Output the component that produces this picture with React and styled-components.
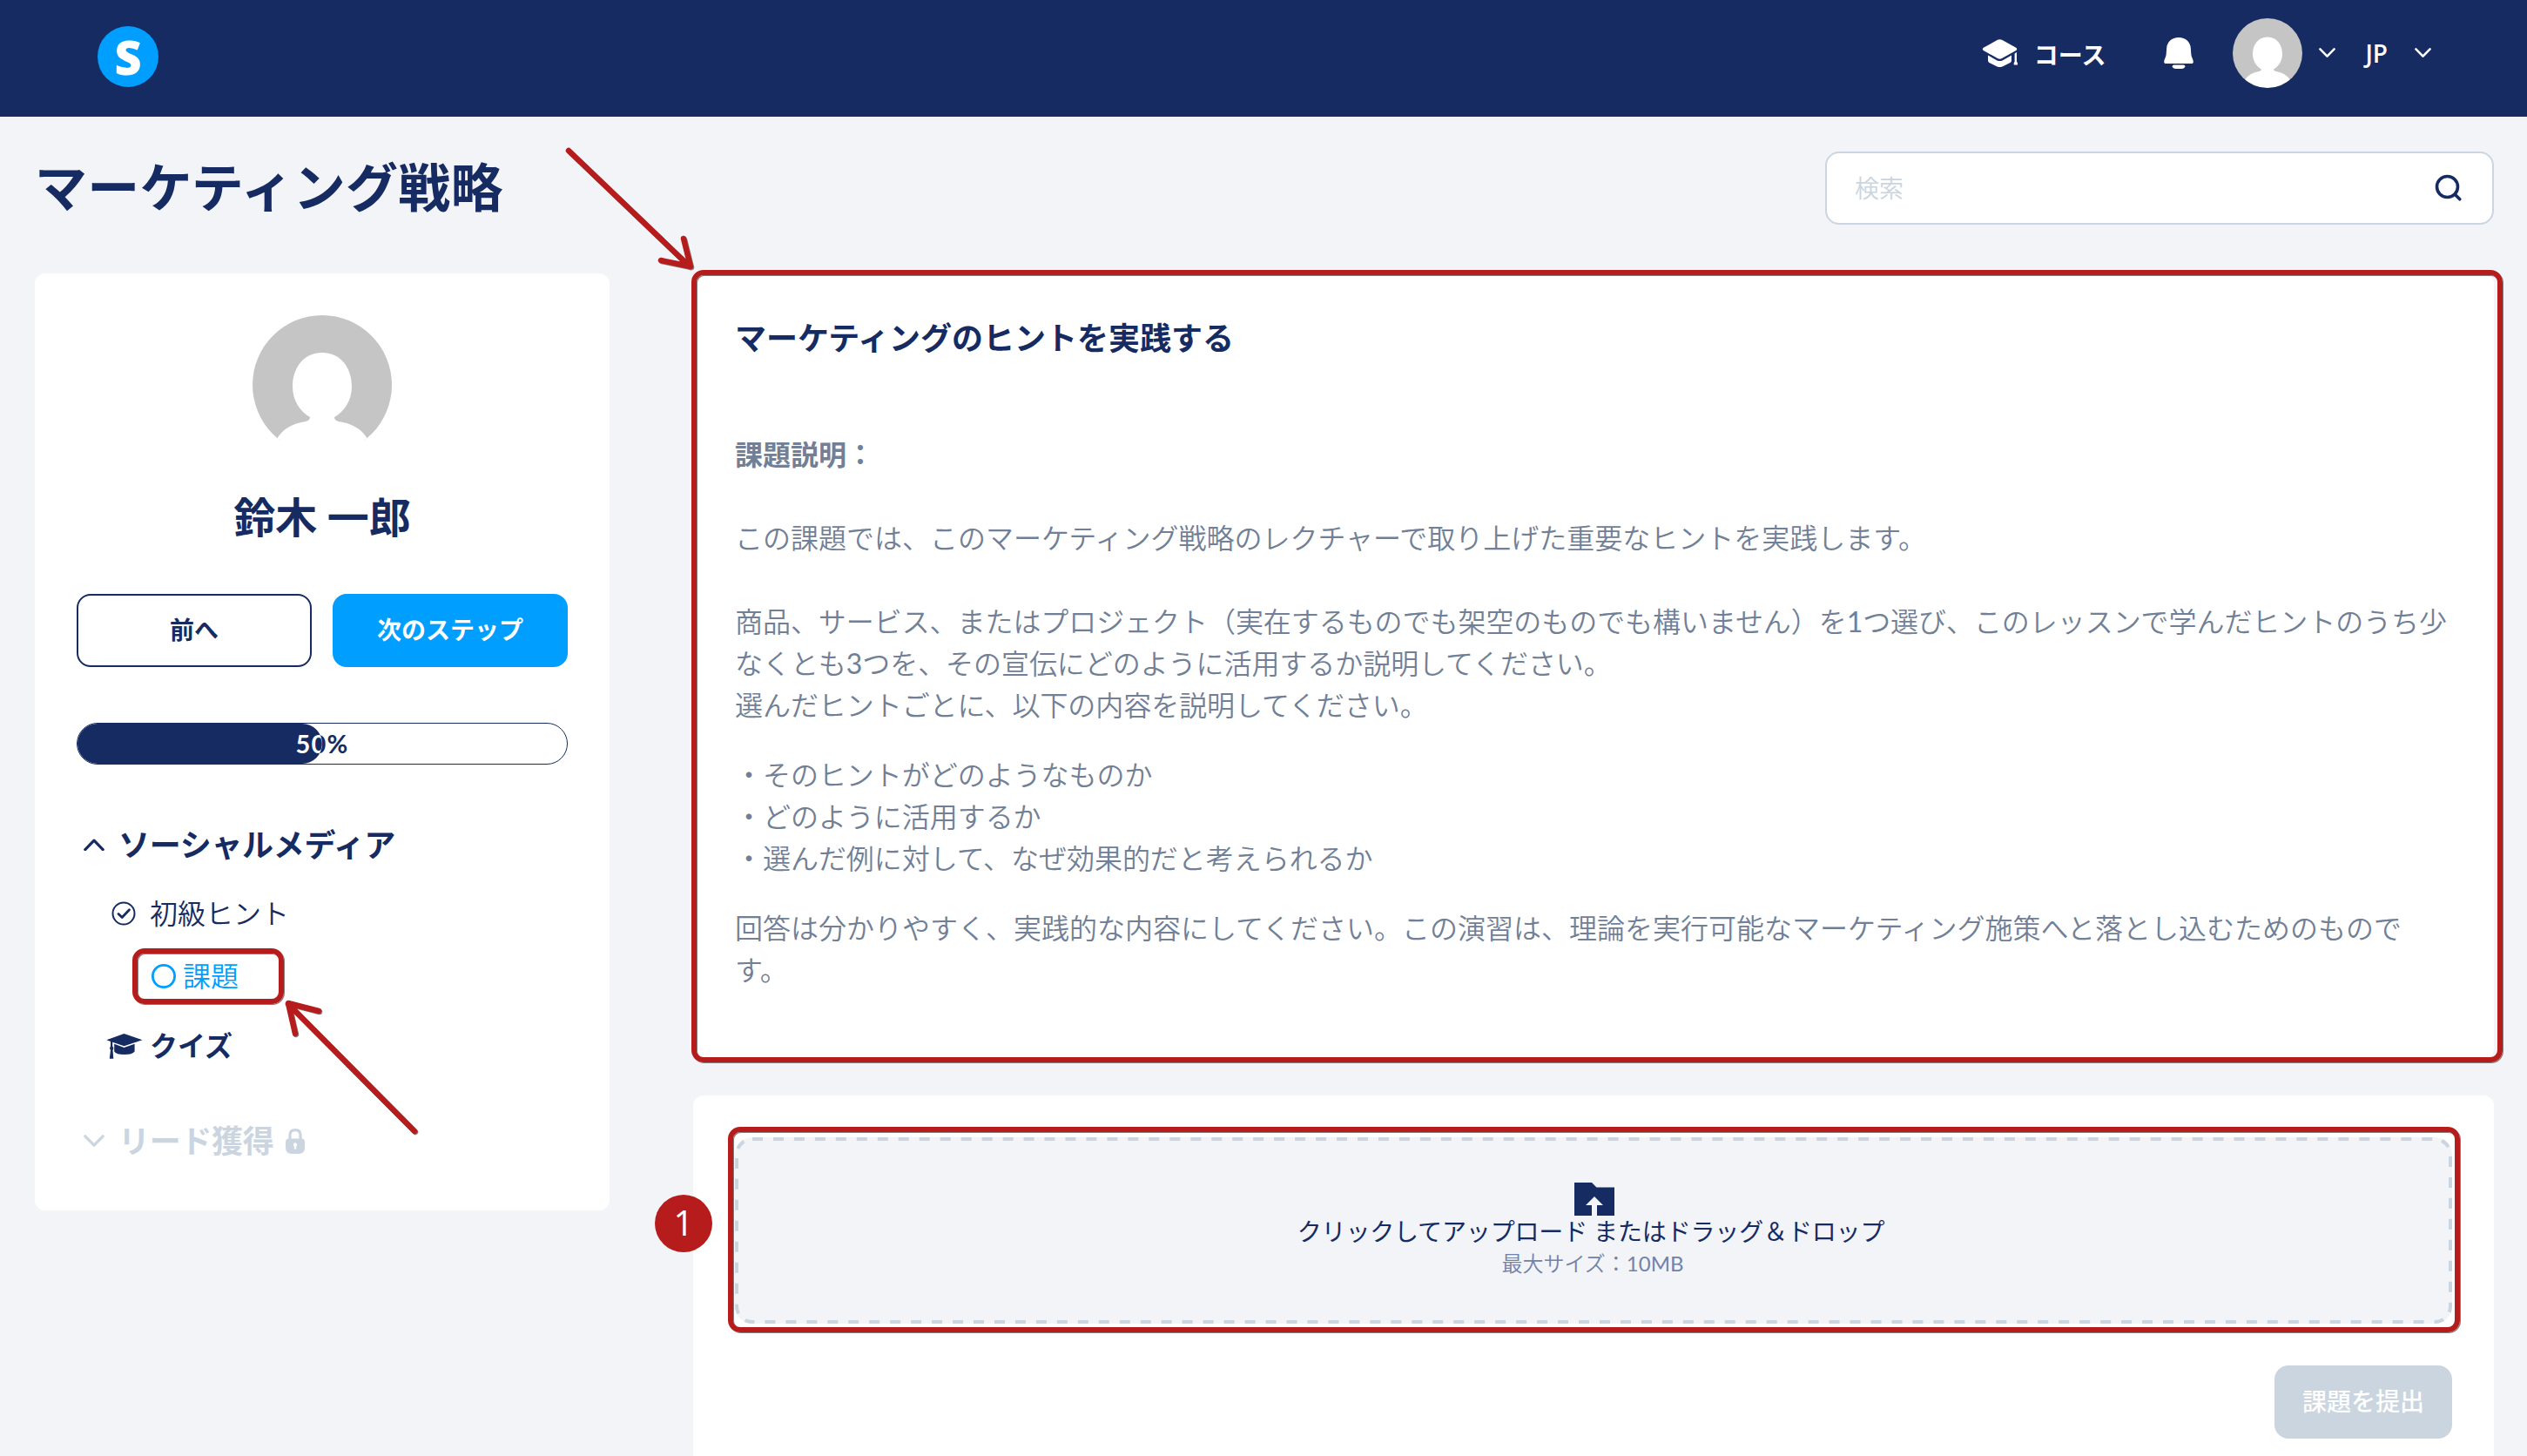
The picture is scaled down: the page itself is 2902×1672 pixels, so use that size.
import React from "react";
import styled, { createGlobalStyle } from "styled-components";

const navy = "#152b62";
const blue = "#009fff";
const red = "#b71c1c";
const slate = "#718096";
const mist = "#cbd5e0";
const canvas = "#f2f4f8";

const GlobalStyle = createGlobalStyle`
  *, *::before, *::after { box-sizing: border-box; }
  body {
    margin: 0;
    background: ${canvas};
    color: ${navy};
    font-family: Lato, "Noto Sans CJK JP", sans-serif;
    overflow: hidden;
  }
  h1, h2, h3, p { margin: 0; }
  button, input { font: inherit; }
`;

const Page = styled.div`
  position: relative;
  display: flex;
  flex-direction: column;
  height: 1672px;
  overflow: hidden;
`;

const Header = styled.header`
  display: flex;
  flex-shrink: 0;
  justify-content: space-between;
  align-items: flex-start;
  height: 134px;
  padding: 0 110px 0 112px;
  background: ${navy};
  color: #fff;
`;

const Logo = styled.div`
  display: flex;
  align-items: center;
  justify-content: center;
  width: 70px;
  height: 70px;
  margin-top: 30px;
  border-radius: 50%;
  background: ${blue};
  font-family: "Open Sans", sans-serif;
  font-weight: 800;
  font-size: 54px;
  line-height: 70px;
`;

const Nav = styled.nav`
  display: flex;
  align-items: center;
  height: 80px;
  margin-top: 21px;
  font-size: 28px;
  line-height: 40px;
  font-weight: 700;
`;

const Courses = styled.span`
  display: flex;
  align-items: center;
  gap: 18px;
  margin-right: 67px;
`;

const NavLabel = styled.span`
  padding-top: 4px;
`;

const Language = styled.span`
  display: flex;
  align-items: center;
  gap: 31px;
  margin-left: 34px;
  font-family: "Open Sans", sans-serif;
  font-weight: 600;
`;

const Account = styled.span`
  display: flex;
  align-items: center;
  gap: 19px;
  margin-left: 45px;
`;

const TitleBar = styled.div`
  display: flex;
  flex-shrink: 0;
  justify-content: space-between;
  align-items: center;
  height: 84px;
  margin: 40px 38px 56px 40px;
`;

const PageTitle = styled.h1`
  padding-bottom: 3px;
  font-size: 60px;
  line-height: 80px;
  font-weight: 700;
  letter-spacing: 0.3px;
`;

const SearchBox = styled.label`
  display: flex;
  align-items: center;
  justify-content: space-between;
  width: 768px;
  height: 84px;
  padding: 0 34px 0 32px;
  border: 2px solid ${mist};
  border-radius: 16px;
  background: #fff;
`;

const Placeholder = styled.span`
  padding-bottom: 3px;
  color: ${mist};
  font-size: 28px;
  font-weight: 350;
`;

const Columns = styled.div`
  display: flex;
  flex-shrink: 0;
  align-items: flex-start;
  gap: 96px;
  padding: 0 38px 0 40px;
`;

const Sidebar = styled.aside`
  display: flex;
  flex-direction: column;
  align-items: stretch;
  width: 660px;
  height: 1076px;
  padding: 48px;
  border-radius: 12px;
  background: #fff;
`;

const Profile = styled.div`
  display: flex;
  flex-direction: column;
  align-items: center;
  gap: 36px;
`;

const UserName = styled.h2`
  font-size: 48px;
  line-height: 72px;
  font-weight: 700;
`;

const Buttons = styled.div`
  display: grid;
  grid-template-columns: 1fr 1fr;
  gap: 24px;
  margin-top: 52px;
`;

const Button = styled.button`
  height: 84px;
  padding: 0 30px 2px;
  border: 2px solid ${(p) => p.$edge};
  border-radius: 16px;
  background: ${(p) => p.$fill};
  color: ${(p) => p.$ink};
  font-size: 28px;
  line-height: 40px;
  font-weight: ${(p) => p.$weight || 700};
  white-space: nowrap;
`;

const Track = styled.div`
  position: relative;
  height: 48px;
  margin-top: 64px;
  border: 1px solid ${navy};
  border-radius: 24px;
  overflow: hidden;
`;

const ProgressText = styled.span`
  display: block;
  width: 562px;
  text-align: center;
  font-size: 29px;
  letter-spacing: 1.2px;
  line-height: 45px;
  font-weight: 700;
  color: ${(p) => p.$ink};
`;

const Fill = styled.div`
  position: absolute;
  inset: 0 auto 0 0;
  border-radius: 0 24px 24px 0;
  background: ${navy};
  overflow: hidden;
`;

const Outline = styled.div`
  display: flex;
  flex-direction: column;
  margin-top: 65px;
`;

const Section = styled.div`
  display: flex;
  align-items: center;
  height: 54px;
  margin-top: ${(p) => p.$top || 0}px;
  padding-left: 8px;
  color: ${(p) => (p.$locked ? mist : navy)};
  font-size: 36px;
  line-height: 54px;
  letter-spacing: -0.3px;
  font-weight: 700;
`;

const SectionName = styled.span`
  margin: 0 13px 0 16px;
`;

const Lesson = styled.div`
  display: flex;
  align-items: center;
  height: 48px;
  margin-top: ${(p) => p.$top}px;
  padding-left: ${(p) => p.$indent}px;
  gap: ${(p) => p.$gap}px;
  color: ${navy};
  font-size: 32px;
  line-height: 48px;
  font-weight: ${(p) => p.$weight || 350};
`;

const CurrentMark = styled.div`
  display: flex;
  align-items: center;
  width: 174px;
  height: 64px;
  margin: 16px 0 0 64px;
  padding-left: 16px;
  gap: 8px;
  border: 6px solid ${red};
  border-radius: 14px;
  box-shadow: 1px 1px 0 #808080, inset 1px 1px 0 #808080;
  color: ${blue};
  font-size: 32px;
  line-height: 48px;
  font-weight: 350;
`;

const Main = styled.main`
  display: flex;
  flex: 1;
  flex-direction: column;
  gap: 42px;
`;

const Callout = styled.div`
  position: absolute;
  inset: ${(p) => p.$inset};
  border: 6px solid ${red};
  border-radius: 14px;
  box-shadow: 1px 1px 0 #808080, inset 1px 1px 0 #808080;
  pointer-events: none;
`;

const TaskCard = styled.section`
  position: relative;
  height: 902px;
  padding: 48px;
  border-radius: 12px;
  background: #fff;
`;

const TaskTitle = styled.h2`
  font-size: 36px;
  line-height: 52px;
  font-weight: 700;
  margin-bottom: 84px;
`;

const Paragraph = styled.p`
  margin-bottom: ${(p) => p.$after}px;
  color: ${slate};
  font-size: 32px;
  line-height: 48px;
  letter-spacing: ${(p) => p.$tracking || 0}px;
  font-weight: ${(p) => p.$weight || 350};
  white-space: nowrap;
`;

const Latin = styled.span`
  font-weight: 400;
`;

const UploadCard = styled.section`
  display: flex;
  flex-direction: column;
  align-items: flex-end;
  gap: 48px;
  height: 460px;
  padding: 48px;
  border-radius: 12px;
  background: #fff;
`;

const DropFrame = styled.div`
  position: relative;
  width: 100%;
`;

const DropZone = styled.div`
  position: relative;
  display: flex;
  flex-direction: column;
  align-items: center;
  height: 214px;
  padding: 52px 0 0 2px;
  border-radius: 20px;
  background: ${canvas};
  overflow: hidden;
`;

const Dashes = styled.svg`
  position: absolute;
  inset: 0;
`;

const DropText = styled.span`
  margin: 0 8px 0 0;
  font-size: 28px;
  line-height: 36px;
  letter-spacing: -0.15px;
`;

const DropHint = styled.span`
  margin: 1px 4px 0 0;
  font-size: 24px;
  line-height: 36px;
  font-weight: 350;
  color: #7282a8;
`;

const StepBadge = styled.div`
  position: absolute;
  left: -92px;
  top: 66px;
  width: 66px;
  height: 66px;
  border-radius: 50%;
  background: ${red};
  color: #fff;
  text-align: center;
  font-family: "Open Sans", sans-serif;
  font-size: 40px;
  line-height: 64px;
`;

const Arrows = styled.svg`
  position: absolute;
  left: 0;
  top: 0;
  pointer-events: none;
  filter: drop-shadow(1px 1px 0 #808080);
`;

const Avatar = ({ size }) => (
  <svg width={size} height={size} viewBox="0 0 160 160">
    <defs>
      <clipPath id={`face${size}`}>
        <circle cx="80" cy="80" r="80" />
      </clipPath>
    </defs>
    <g clipPath={`url(#face${size})`}>
      <path fill="#c5c5c5" d="M0 0H160V144H0Z" />
      <path
        fill="#fff"
        d="M80 43C59 43 46 60 46 82C46 98 55 111 66 117C66 121 62 122 56 123C42 126 33 133 28 142L20 165H140L132 142C127 133 118 126 104 123C98 122 94 121 94 117C105 111 114 98 114 82C114 60 101 43 80 43Z"
      />
    </g>
  </svg>
);

const Chevron = ({ width = 24, up, stroke = 3.2 }) => (
  <svg width={width} height={width * 0.6} viewBox="0 0 24 14.4" fill="none">
    <path
      d={up ? "M1.8 12.6L12 2.2L22.2 12.6" : "M1.8 1.8L12 12.2L22.2 1.8"}
      stroke="currentColor"
      strokeWidth={stroke}
      strokeLinecap="round"
      strokeLinejoin="round"
    />
  </svg>
);

const CourseIcon = () => (
  <svg width="42" height="32" viewBox="0 0 42 32" fill="#fff">
    <path d="M18 .8Q20.500 -.5 23 .8L39.200 9.800Q41.200 11.400 39.200 13L23 22Q20.500 23.400 18 22L1.800 13Q-.2 11.400 1.800 9.800Z" />
    <path d="M7 18.600L17.500 24.400Q20.500 25.800 23.500 24.400L34 18.600V24.500Q34 26 32.500 27L24 31.300Q20.500 32.800 17 31.300L8.500 27Q7 26 7 24.500Z" />
    <path d="M37.600 16.500L40 15V25.800Q41.600 27.300 41 29.500H36.800Q36.200 27.300 37.600 25.800Z" />
  </svg>
);

const BellIcon = () => (
  <svg width="34" height="36" viewBox="0 0 34 36" fill="#fff">
    <path d="M17 0C9 0 3.600 5.500 3.200 12L2.600 20C2.300 23 .2 25 .2 28C.2 29.500 1 30 2.400 30H31.600C33 30 33.800 29.500 33.800 28C33.800 25 31.700 23 31.400 20L30.800 12C30.400 5.500 25 0 17 0Z" />
    <path d="M11.500 31.600H22.500Q24.500 31.600 24.300 33.300Q23.500 36 20.500 36H13.500Q10.500 36 9.700 33.300Q9.500 31.600 11.500 31.600Z" />
  </svg>
);

const SearchIcon = () => (
  <svg width="32" height="32" viewBox="0 0 32 32" fill="none" stroke={navy} strokeWidth="3.600" strokeLinecap="round">
    <circle cx="14.500" cy="14.500" r="12" />
    <path d="M23.500 23.500L28.800 28.800" />
  </svg>
);

const DoneIcon = () => (
  <svg width="28" height="28" viewBox="0 0 28 28" fill="none" stroke={navy} strokeLinecap="round" strokeLinejoin="round">
    <circle cx="14" cy="14" r="12.500" strokeWidth="2" />
    <path d="M8 14.500L12.200 18.500L20.500 9.800" strokeWidth="2.800" />
  </svg>
);

const OpenIcon = () => (
  <svg width="28" height="28" viewBox="0 0 28 28" fill="none">
    <circle cx="14" cy="14" r="12.600" stroke={blue} strokeWidth="2.800" />
  </svg>
);

const QuizIcon = () => (
  <svg width="42" height="29" viewBox="0 0 42 29" fill={navy}>
    <path d="M20.500 0L41.500 7.200L20.500 14.200L7.200 9.800V14.500Q9.300 16.300 7.500 19L8.300 28.700H3.800L5 19Q3.300 16.300 5 14.500V9L.3 7.200Z" />
    <path d="M9.200 11.800L20.500 16L32.600 11.800V20.500Q30 24 20.800 24Q11.500 24 9.200 20.500Z" />
  </svg>
);

const LockIcon = () => (
  <svg width="22" height="29" viewBox="0 0 22 29">
    <path d="M5 13V7.500Q5 1.700 11 1.700Q17 1.700 17 7.500V13" fill="none" stroke={mist} strokeWidth="3.200" />
    <path fill={mist} fillRule="evenodd" d="M4 11.500H18Q22 11.500 22 15.500V22Q22 29 15 29H7Q0 29 0 22V15.500Q0 11.500 4 11.500ZM11 16.200A2.400 2.400 0 0 0 9.800 20.500V23.500H12.200V20.500A2.400 2.400 0 0 0 11 16.200Z" />
  </svg>
);

const FolderIcon = () => (
  <svg width="46" height="38" viewBox="0 0 46 38">
    <path fill={navy} d="M0 0H20L25.500 5.500H46V38H0Z" />
    <path fill={canvas} d="M23 16L33 26H26V38H20V26H13Z" />
  </svg>
);

const progress = 50;

export default function App() {
  return (
    <Page>
      <GlobalStyle />
      <Header>
        <Logo>S</Logo>
        <Nav>
          <Courses>
            <CourseIcon />
            <NavLabel>コース</NavLabel>
          </Courses>
          <BellIcon />
          <Account>
            <Avatar size={80} />
            <Chevron width={19} />
          </Account>
          <Language>
            JP
            <Chevron width={19} />
          </Language>
        </Nav>
      </Header>

      <TitleBar>
        <PageTitle>マーケティング戦略</PageTitle>
        <SearchBox>
          <Placeholder>検索</Placeholder>
          <SearchIcon />
        </SearchBox>
      </TitleBar>

      <Columns>
        <Sidebar>
          <Profile>
            <Avatar size={160} />
            <UserName>鈴木 一郎</UserName>
          </Profile>
          <Buttons>
            <Button $edge={navy} $fill="#fff" $ink={navy}>前へ</Button>
            <Button $edge={blue} $fill={blue} $ink="#fff">次のステップ</Button>
          </Buttons>
          <Track>
            <ProgressText $ink={navy}>{progress}%</ProgressText>
            <Fill style={{ width: `${progress}%` }}>
              <ProgressText $ink="#fff">{progress}%</ProgressText>
            </Fill>
          </Track>
          <Outline>
            <Section>
              <Chevron up />
              <SectionName>ソーシャルメディア</SectionName>
            </Section>
            <Lesson $top={28} $indent={40} $gap={16}>
              <DoneIcon />
              初級ヒント
            </Lesson>
            <CurrentMark>
              <OpenIcon />
              課題
            </CurrentMark>
            <Lesson $top={24} $indent={34} $gap={8} $weight={700}>
              <QuizIcon />
              クイズ
            </Lesson>
            <Section $locked $top={58}>
              <Chevron />
              <SectionName>リード獲得</SectionName>
              <LockIcon />
            </Section>
          </Outline>
        </Sidebar>

        <Main>
          <TaskCard>
            <TaskTitle>マーケティングのヒントを実践する</TaskTitle>
            <Paragraph $after={48} $weight={700}>課題説明：</Paragraph>
            <Paragraph $after={48}>
              この課題では、このマーケティング戦略のレクチャーで取り上げた重要なヒントを実践します。
            </Paragraph>
            <Paragraph $after={32} $tracking={-0.06}>
              商品、サービス、またはプロジェクト（実在するものでも架空のものでも構いません）を<Latin>1</Latin>つ選び、このレッスンで学んだヒントのうち少
              <br />
              なくとも<Latin>3</Latin>つを、その宣伝にどのように活用するか説明してください。
              <br />
              選んだヒントごとに、以下の内容を説明してください。
            </Paragraph>
            <Paragraph $after={32} $tracking={-0.04}>
              ・そのヒントがどのようなものか
              <br />
              ・どのように活用するか
              <br />
              ・選んだ例に対して、なぜ効果的だと考えられるか
            </Paragraph>
            <Paragraph $after={0}>
              回答は分かりやすく、実践的な内容にしてください。この演習は、理論を実行可能なマーケティング施策へと落とし込むためのもので
              <br />
              す。
            </Paragraph>
            <Callout $inset="-4px -10px -4px -2px" />
          </TaskCard>

          <UploadCard>
            <DropFrame>
              <DropZone>
                <Dashes width="1972" height="214" fill="none">
                  <rect width="1972" height="214" rx="20" stroke={mist} strokeWidth="8" strokeDasharray="12 11.965" />
                </Dashes>
                <FolderIcon />
                <DropText>クリックしてアップロード またはドラッグ＆ドロップ</DropText>
                <DropHint>
                  最大サイズ：<Latin>10MB</Latin>
                </DropHint>
              </DropZone>
              <Callout $inset="-12px -9px -10px -8px" />
              <StepBadge>1</StepBadge>
            </DropFrame>
            <Button $edge={mist} $fill={mist} $ink="#fff" $weight={500}>課題を提出</Button>
          </UploadCard>
        </Main>
      </Columns>

      <Arrows width="900" height="1400" fill="none" stroke={red} strokeWidth="6.500" strokeLinecap="round" strokeLinejoin="round">
        <path d="M653 173L792 306M785 274L793 306L759 299" />
        <path d="M476 1299L331 1153M366 1161L331 1152L339 1187" />
      </Arrows>
    </Page>
  );
}
